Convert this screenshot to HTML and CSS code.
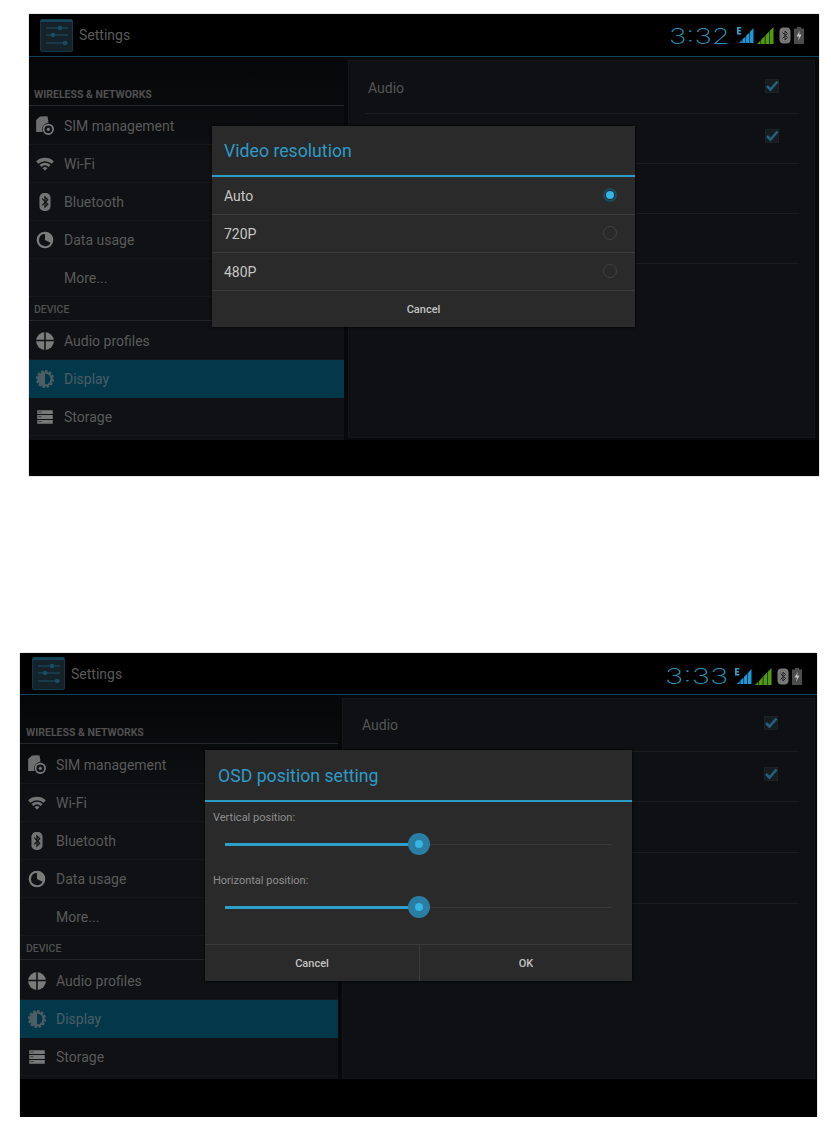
FILE: index.html
```html
<!DOCTYPE html>
<html lang="en">
<head>
    <meta charset="UTF-8">
    <title>Settings</title>
    <link rel="stylesheet" href="styles.css">
</head>
<body>
<svg class="defs">
    <symbol id="i-sliders" viewBox="0 0 33 33">
        <rect x="0.5" y="0.5" width="32" height="32" rx="1" fill="#15222a" stroke="#0f3a4c"/>
        <rect x="1" y="1" width="31" height="2" fill="#16425a"/>
        <path d="M6 9H28M6 16H28M6 24H28" stroke="#1f4f66" stroke-width="1"/>
        <circle cx="20" cy="9" r="2.2" fill="#174f68"/>
        <circle cx="13" cy="16" r="2.2" fill="#174f68"/>
        <circle cx="25" cy="24" r="2.2" fill="#174f68"/>
    </symbol>
    <symbol id="i-sim" viewBox="0 0 18 18">
        <path d="M1 3.500 4.500 0.500H11.500V14.500H1Z" fill="#6e6e6e"/>
        <path d="M7 0.500 9.500 0.500 12 3.500V6H9.500Z" fill="#6e6e6e"/>
        <circle cx="12" cy="12" r="5.600" fill="#101215"/>
        <circle cx="12" cy="12" r="4.300" fill="none" stroke="#7d7d7d" stroke-width="1.500"/>
        <circle cx="12" cy="12" r="1.400" fill="#7d7d7d"/>
    </symbol>
    <symbol id="i-wifi" viewBox="0 0 18 18">
        <path d="M1 6.500A12 12 0 0 1 17 6.500L15 8.800A9 9 0 0 0 3 8.800Z" fill="#737373"/>
        <path d="M4 9.800A7.500 7.500 0 0 1 14 9.800L12.300 11.600A5 5 0 0 0 5.700 11.600Z" fill="#737373"/>
        <path d="M6.700 12.600A3.500 3.500 0 0 1 11.300 12.600L9 15Z" fill="#737373"/>
    </symbol>
    <symbol id="i-bt" viewBox="0 0 18 18">
        <rect x="4" y="1" width="10" height="16" rx="4" fill="#737373"/>
        <path d="M6.500 6 11.500 11 9 13.500V4.500L11.500 7 6.500 12" fill="none" stroke="#101114" stroke-width="1.100"/>
    </symbol>
    <symbol id="i-pie" viewBox="0 0 18 18">
        <circle cx="9" cy="9" r="7.500" fill="#7b7b7b"/>
        <path d="M9 3.500A5.500 5.500 0 1 0 14 11.500L9 9Z" fill="#101114"/>
    </symbol>
    <symbol id="i-audio" viewBox="0 0 18 18">
        <circle cx="9" cy="9" r="8" fill="#7b7b7b"/>
        <path d="M0 8.500H18M9 0V18" stroke="#101114" stroke-width="1.400"/>
    </symbol>
    <symbol id="i-display" viewBox="0 0 18 18">
        <circle cx="9" cy="9" r="7.300" fill="none" stroke="#4e5e65" stroke-width="1.600" stroke-dasharray="2.400 1.400"/>
        <circle cx="9" cy="9" r="6.800" fill="#4e5e65"/>
        <path d="M9 4A5 5 0 0 1 9 14Z" fill="#03384b"/>
    </symbol>
    <symbol id="i-storage" viewBox="0 0 18 18">
        <path d="M2 3H16V6.400H2ZM2 7.300H16V10.700H2ZM2 11.600H16V15H2Z" fill="#787878"/>
        <path d="M3 4.500H6M3 8.800H6M3 13.100H6" stroke="#2a2a2a" stroke-width="0.700"/>
    </symbol>
    <symbol id="i-check" viewBox="0 0 16 16">
        <rect x="1.500" y="1.500" width="13" height="13" fill="#161c20" stroke="#1b2226"/>
        <path d="M3 8 6.500 11.500 13.500 3.500" fill="none" stroke="#25607c" stroke-width="2.600"/>
    </symbol>
    <symbol id="i-data" viewBox="0 0 18 17">
        <path d="M0 0H4.500V1.500H1.800V3.300H4V4.700H1.800V6.500H4.500V8H0Z" fill="#2f9fd0"/>
        <path d="M2 17 5 14V17ZM5.600 17V13.300L9 10V17ZM9.600 17V9.400L13 6V17ZM13.600 17V5.400L17.500 1V17Z" fill="#1f97d6"/>
    </symbol>
    <symbol id="i-signal" viewBox="0 0 17 17">
        <path d="M0 17 3.500 13.500V17ZM4.100 17V12.900L7.800 9V17ZM8.400 17V8.400L12 4.500V17ZM12.600 17V3.900L16.500 0V17Z" fill="#4f9a10"/>
    </symbol>
    <symbol id="i-pill" viewBox="0 0 12 17">
        <rect x="0.500" y="0.500" width="11" height="16" rx="4" fill="#777"/>
        <path d="M3.500 5.500 8.500 10.500 6 13V4L8.500 6.500 3.500 11.500" fill="none" stroke="#222" stroke-width="1"/>
    </symbol>
    <symbol id="i-battery" viewBox="0 0 12 17">
        <path d="M4 0H8V1.500H11V17H1V1.500H4Z" fill="#4c4c4c"/>
        <path d="M7 3.500 3.500 9.500H6L5 14 8.500 7.500H6Z" fill="#c4c4c4"/>
    </symbol>
</svg>

<div class="screen screen-a">
    <div class="topbar">
        <svg class="app-icon"><use href="#i-sliders"/></svg>
        <span class="app-title">Settings</span>
        <div class="status">
            <span class="clock">3:32</span>
            <svg class="st-data"><use href="#i-data"/></svg>
            <svg class="st-signal"><use href="#i-signal"/></svg>
            <svg class="st-small"><use href="#i-pill"/></svg>
            <svg class="st-small"><use href="#i-battery"/></svg>
        </div>
    </div>
    <div class="main">
        <div class="sidebar">
            <div class="list-head">WIRELESS &amp; NETWORKS</div>
            <div class="item"><svg class="ico"><use href="#i-sim"/></svg>SIM management</div>
            <div class="item"><svg class="ico"><use href="#i-wifi"/></svg>Wi-Fi</div>
            <div class="item"><svg class="ico"><use href="#i-bt"/></svg>Bluetooth</div>
            <div class="item"><svg class="ico"><use href="#i-pie"/></svg>Data usage</div>
            <div class="item"><span class="ico"></span>More...</div>
            <div class="list-head list-head-device">DEVICE</div>
            <div class="item"><svg class="ico"><use href="#i-audio"/></svg>Audio profiles</div>
            <div class="item item-on"><svg class="ico"><use href="#i-display"/></svg>Display</div>
            <div class="item"><svg class="ico"><use href="#i-storage"/></svg>Storage</div>
        </div>
        <div class="panel">
            <div class="pref">Audio<svg class="check"><use href="#i-check"/></svg></div>
            <div class="pref"><svg class="check"><use href="#i-check"/></svg></div>
            <div class="pref"></div>
            <div class="pref"></div>
        </div>
    </div>
    <div class="navbar"></div>

    <div class="dialog dialog-res">
        <div class="dlg-title">Video resolution</div>
        <div class="opt">Auto<span class="radio radio-on"></span></div>
        <div class="opt">720P<span class="radio"></span></div>
        <div class="opt">480P<span class="radio"></span></div>
        <div class="dlg-buttons">
            <div class="dlg-btn">Cancel</div>
        </div>
    </div>
</div>

<div class="screen screen-b">
    <div class="topbar">
        <svg class="app-icon"><use href="#i-sliders"/></svg>
        <span class="app-title">Settings</span>
        <div class="status">
            <span class="clock">3:33</span>
            <svg class="st-data"><use href="#i-data"/></svg>
            <svg class="st-signal"><use href="#i-signal"/></svg>
            <svg class="st-small"><use href="#i-pill"/></svg>
            <svg class="st-small"><use href="#i-battery"/></svg>
        </div>
    </div>
    <div class="main">
        <div class="sidebar">
            <div class="list-head">WIRELESS &amp; NETWORKS</div>
            <div class="item"><svg class="ico"><use href="#i-sim"/></svg>SIM management</div>
            <div class="item"><svg class="ico"><use href="#i-wifi"/></svg>Wi-Fi</div>
            <div class="item"><svg class="ico"><use href="#i-bt"/></svg>Bluetooth</div>
            <div class="item"><svg class="ico"><use href="#i-pie"/></svg>Data usage</div>
            <div class="item"><span class="ico"></span>More...</div>
            <div class="list-head list-head-device">DEVICE</div>
            <div class="item"><svg class="ico"><use href="#i-audio"/></svg>Audio profiles</div>
            <div class="item item-on"><svg class="ico"><use href="#i-display"/></svg>Display</div>
            <div class="item"><svg class="ico"><use href="#i-storage"/></svg>Storage</div>
        </div>
        <div class="panel">
            <div class="pref">Audio<svg class="check"><use href="#i-check"/></svg></div>
            <div class="pref"><svg class="check"><use href="#i-check"/></svg></div>
            <div class="pref"></div>
            <div class="pref"></div>
        </div>
    </div>
    <div class="navbar"></div>

    <div class="dialog dialog-osd">
        <div class="dlg-title">OSD position setting</div>
        <div class="osd-body">
            <div class="osd-label">Vertical position:</div>
            <div class="slider"><div class="slider-fill" style="width: 50%"><span class="thumb"></span></div></div>
            <div class="osd-label">Horizontal position:</div>
            <div class="slider"><div class="slider-fill" style="width: 50%"><span class="thumb"></span></div></div>
        </div>
        <div class="dlg-buttons">
            <div class="dlg-btn">Cancel</div>
            <div class="dlg-btn">OK</div>
        </div>
    </div>
</div>
</body>
</html>
```

FILE: styles.css
```css
* {
    box-sizing: border-box;
    font-family: 'Roboto', sans-serif;
}

html, body {
    margin: 0;
    background: #fff;
}

.defs {
    display: none;
}

.screen {
    position: relative;
    display: flex;
    flex-direction: column;
    background: #000;
    box-shadow: 0 0 1px #777;
}

.screen-a {
    width: 790px;
    height: 462px;
    margin: 14px 0 0 29px;
}

.screen-b {
    width: 797px;
    height: 464px;
    margin: 177px 0 0 20px;
}

/* top bar */
.topbar {
    display: flex;
    align-items: center;
    height: 43px;
    flex: none;
    padding: 0 14px 0 11px;
    border-bottom: 1px solid #0d4459;
}

.screen-b .topbar {
    height: 42px;
    padding-left: 12px;
}

.app-icon {
    width: 33px;
    height: 33px;
    margin-right: 6px;
}

.app-title {
    font-size: 14px;
    color: #5a5a5a;
}

.status {
    display: flex;
    align-items: center;
    margin-left: auto;
}

.screen-b .status {
    margin-top: 5px;
}

.clock {
    display: inline-block;
    width: 62px;
    margin-right: 6px;
    font-family: 'Inter', sans-serif;
    font-size: 22px;
    font-weight: 200;
    line-height: 22px;
    color: #2a8fb5;
    white-space: nowrap;
    transform: scaleX(1.33);
    transform-origin: left center;
}

.screen-a .clock {
    margin-top: 1px;
}

.screen-b .clock {
    width: 64px;
    transform: scaleX(1.4);
}

.st-data {
    width: 17px;
    height: 16px;
    margin-right: 3px;
}

.st-signal {
    width: 17px;
    height: 17px;
    margin-right: 3px;
}

.st-small {
    width: 12px;
    height: 17px;
    margin-left: 2px;
}

/* content */
.main {
    display: flex;
    flex: 1;
    min-height: 0;
    background: #07080a;
}

.sidebar {
    width: 315px;
    flex: none;
    padding-top: 30px;
    background: linear-gradient(#050607, #0f1114 110px);
}

.screen-b .sidebar {
    width: 318px;
}

.list-head {
    height: 19px;
    margin-bottom: 1px;
    padding: 0 0 0 5px;
    font-size: 10.500px;
    font-weight: 700;
    line-height: 16px;
    color: #505050;
    border-bottom: 1px solid #24272a;
}

.screen-b .list-head {
    margin-bottom: 2px;
    padding-left: 6px;
}

.list-head-device {
    margin-top: 5px;
    font-weight: 500;
}

.item {
    display: flex;
    align-items: center;
    height: 38px;
    padding-left: 6px;
    font-size: 14px;
    color: #5a5a5a;
    border-bottom: 1px solid #15171a;
}

.screen-b .item {
    padding-left: 7px;
}

.item-on {
    background: #03384b;
    color: #4b5d65;
    border-bottom: 0;
}

.ico {
    display: block;
    width: 20px;
    height: 20px;
    margin-right: 9px;
    flex: none;
}

.panel {
    flex: 1;
    margin: 3px 4px 2px 4px;
    padding: 3px 15px 0 16px;
    background: #0e1013;
    border: 1px solid #131518;
}

.screen-b .panel {
    margin: 3px 2px 0 4px;
    padding-top: 2px;
}

.pref {
    display: flex;
    align-items: center;
    justify-content: space-between;
    height: 50px;
    padding: 0 19px 2px 3px;
    font-size: 14px;
    color: #555;
    border-bottom: 1px solid #1a1c1f;
}

.screen-b .pref {
    height: 50.700px;
    padding-right: 20px;
}

.pref:empty, .pref:nth-child(2) {
    justify-content: flex-end;
}

.check {
    width: 16px;
    height: 16px;
    margin-top: -4px;
}

.navbar {
    height: 36px;
    flex: none;
    background: #000;
}

.screen-b .navbar {
    height: 38px;
}

/* dialogs */
.dialog {
    position: absolute;
    background: #2a2a2a;
    box-shadow: 0 0 3px #000;
}

.dialog-res {
    left: 183px;
    top: 112px;
    width: 423px;
    height: 201px;
}

.dialog-osd {
    left: 185px;
    top: 97px;
    width: 427px;
    height: 231px;
    display: flex;
    flex-direction: column;
}

.dlg-title {
    height: 51px;
    padding-left: 12px;
    font-size: 17.700px;
    line-height: 51px;
    color: #2e9ac6;
    border-bottom: 2px solid #2b9bc6;
}

.dialog-osd .dlg-title {
    height: 52px;
    line-height: 52px;
    padding-left: 13px;
}

.opt {
    display: flex;
    align-items: center;
    justify-content: space-between;
    height: 38px;
    padding: 0 18px 0 12px;
    font-size: 14px;
    color: #c6c6c6;
    border-bottom: 1px solid #3c3c3c;
}

.radio {
    position: relative;
    width: 14px;
    height: 14px;
    margin-top: -2px;
    border: 1px solid #404040;
    border-radius: 50%;
}

.radio-on {
    border-color: #1c4a5e;
    border-width: 2px;
}

.radio-on::after {
    content: "";
    position: absolute;
    left: 1px;
    top: 1px;
    width: 8px;
    height: 8px;
    border-radius: 50%;
    background: #33b5e5;
}

.dlg-buttons {
    display: flex;
    height: 37px;
}

.dialog-res .dlg-buttons {
    height: 36px;
}

.dialog-osd .dlg-buttons {
    border-top: 1px solid #3c3c3c;
}

.dlg-btn {
    flex: 1;
    display: flex;
    align-items: center;
    justify-content: center;
    font-size: 11px;
    font-weight: 500;
    color: #c4c4c4;
}

.dialog-osd .dlg-btn:first-child {
    flex: none;
    width: 214px;
}

.dlg-btn + .dlg-btn {
    border-left: 1px solid #3c3c3c;
}

.osd-body {
    flex: 1;
    padding: 9px 20px 0 8px;
}

.osd-label {
    height: 14px;
    font-size: 11px;
    line-height: 14px;
    color: #8e8e8e;
}

.slider {
    position: relative;
    height: 1px;
    margin: 19px 0 29px 12px;
    background: #3a3a3a;
}

.slider-fill {
    position: relative;
    top: -1px;
    height: 3px;
    background: #2e9fcb;
}

.thumb {
    position: absolute;
    right: -11px;
    top: -10px;
    width: 22px;
    height: 22px;
    border-radius: 50%;
    background: #2a7ea3;
}

.thumb::after {
    content: "";
    position: absolute;
    left: 7px;
    top: 7px;
    width: 8px;
    height: 8px;
    border-radius: 50%;
    background: #33b5e5;
}
```
